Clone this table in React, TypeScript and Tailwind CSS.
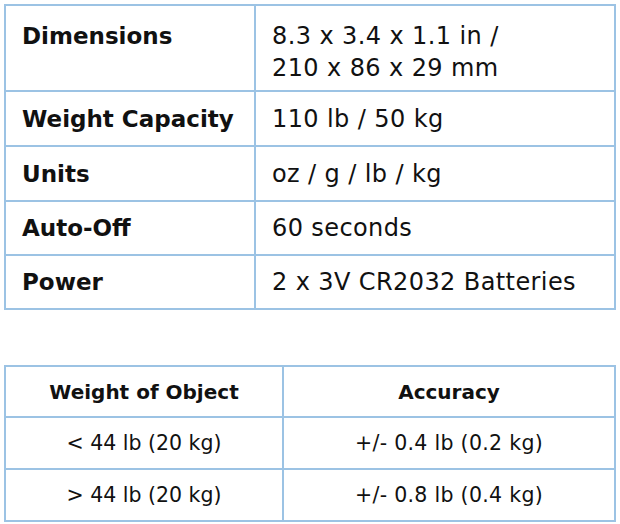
const specs: { label: string; value: string[] }[] = [
  { label: "Dimensions", value: ["8.3 x 3.4 x 1.1 in /", "210 x 86 x 29 mm"] },
  { label: "Weight Capacity", value: ["110 lb / 50 kg"] },
  { label: "Units", value: ["oz / g / lb / kg"] },
  { label: "Auto-Off", value: ["60 seconds"] },
  { label: "Power", value: ["2 x 3V CR2032 Batteries"] },
];

const accuracy = [
  { weight: "< 44 lb (20 kg)", accuracy: "+/- 0.4 lb (0.2 kg)" },
  { weight: "> 44 lb (20 kg)", accuracy: "+/- 0.8 lb (0.4 kg)" },
];

export default function App() {
  return (
    <main className="min-h-screen bg-white px-[4px] pt-[4px] text-[#111] [font-family:'DejaVu_Sans',sans-serif]">
      {/* Specs */}
      <table className="w-[612px] border-collapse border-2 border-[#9cc3e4]">
        <tbody>
          {specs.map((row, i) => (
            <tr
              key={row.label}
              className={i === 0 ? "h-[86px]" : i < 3 ? "h-[55px]" : "h-[54px]"}
            >
              <td
                className={`w-[250px] border-2 border-[#9cc3e4] pl-[16px] text-[23px] leading-[32px] font-bold ${
                  i === 0 ? "pt-[14px] align-top" : "align-middle"
                }`}
              >
                {row.label}
              </td>
              <td
                className={`border-2 border-[#9cc3e4] pl-[16px] text-[24px] leading-[32px] tracking-[0.4px] ${
                  i === 0 ? "pt-[14px] align-top" : "align-middle"
                }`}
              >
                {row.value.map((line) => (
                  <div key={line}>{line}</div>
                ))}
              </td>
            </tr>
          ))}
        </tbody>
      </table>

      {/* Accuracy */}
      <table className="mt-[55px] w-[612px] border-collapse border-2 border-[#9cc3e4] text-center text-[20.5px]">
        <thead>
          <tr className="h-[51px]">
            <th className="w-[278px] border-2 border-[#9cc3e4] font-bold text-[20px]">Weight of Object</th>
            <th className="border-2 border-[#9cc3e4] font-bold text-[20px]">Accuracy</th>
          </tr>
        </thead>
        <tbody>
          {accuracy.map((row) => (
            <tr key={row.weight} className="h-[52px]">
              <td className="border-2 border-[#9cc3e4]">{row.weight}</td>
              <td className="border-2 border-[#9cc3e4] tracking-[0.3px]">{row.accuracy}</td>
            </tr>
          ))}
        </tbody>
      </table>
    </main>
  );
}
